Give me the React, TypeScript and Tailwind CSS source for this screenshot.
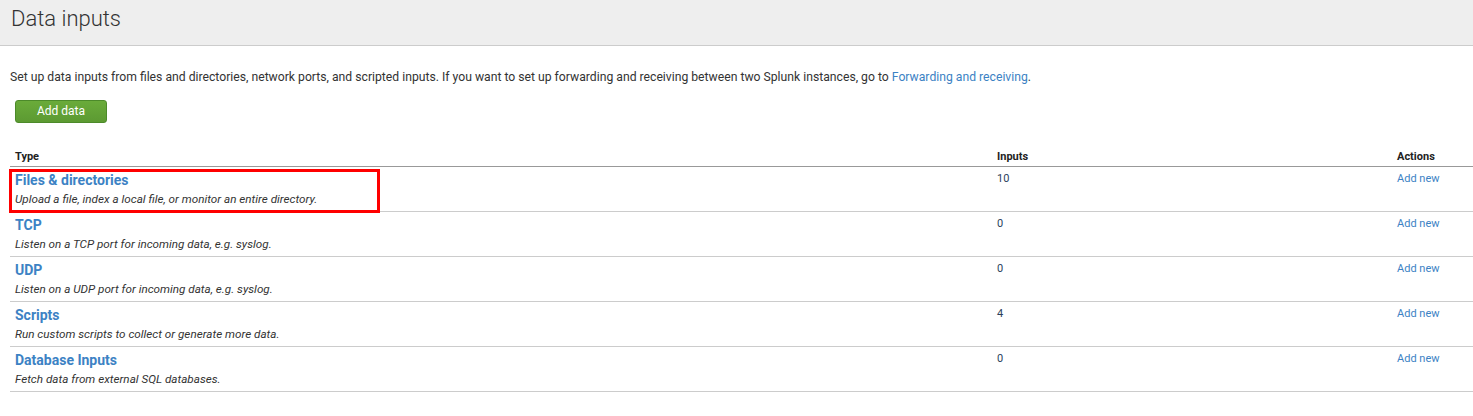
import React from 'react';

interface InputType {
  name: string;
  description: string;
  count: number;
}

const inputTypes: InputType[] = [
  { name: 'Files & directories', description: 'Upload a file, index a local file, or monitor an entire directory.', count: 10 },
  { name: 'TCP', description: 'Listen on a TCP port for incoming data, e.g. syslog.', count: 0 },
  { name: 'UDP', description: 'Listen on a UDP port for incoming data, e.g. syslog.', count: 0 },
  { name: 'Scripts', description: 'Run custom scripts to collect or generate more data.', count: 4 },
  { name: 'Database Inputs', description: 'Fetch data from external SQL databases.', count: 0 },
];

export default function App() {
  return (
    <div className="relative min-h-[416px] bg-white text-[#333333] font-['Roboto',_'Liberation_Sans',_sans-serif]">
      {/* Page header */}
      <div className="h-[46px] bg-[#eeeeee] border-b border-[#cccccc] px-[11px] pt-[3px]">
        <h1 className="text-[22px] font-light leading-[32px] text-[#333333]">Data inputs</h1>
      </div>

      <div className="pl-[10px]">
        <p className="pt-[23px] text-[12.2px] leading-[16px]">
          Set up data inputs from files and directories, network ports, and scripted inputs. If you want to set up forwarding and receiving between two Splunk instances, go to{' '}
          <a className="text-[#3c82c4]">Forwarding and receiving</a>.
        </p>

        <button className="ml-[5px] mt-[15px] h-[23px] w-[92px] rounded-[3px] border border-[#4c8a2a] bg-gradient-to-b from-[#6aab3a] to-[#5c9a32] text-[12px] leading-[21px] text-white">
          Add data
        </button>

        {/* Table */}
        <div className="mt-[23px]">
          <div className="grid h-[21px] grid-cols-[982px_400px_1fr] border-b border-[#999999] text-[11px] font-bold leading-[14px] text-[#222222]">
            <div className="pl-[5px] pt-[4px]">Type</div>
            <div className="pl-[5px] pt-[4px]">Inputs</div>
            <div className="pl-[5px] pt-[4px]">Actions</div>
          </div>
          {inputTypes.map((t) => (
            <div key={t.name} className="grid h-[45px] grid-cols-[982px_400px_1fr] border-b border-[#cccccc]">
              <div className="pl-[5px] pt-[5px]">
                <a className="block text-[14px] font-bold leading-[17px] text-[#3c82c4]">{t.name}</a>
                <p className="mt-[3px] text-[11.7px] italic leading-[15px] text-[#333333]">{t.description}</p>
              </div>
              <div className="pl-[5px] pt-[5px] text-[11px] leading-[14px] text-[#2b3f5c]">{t.count}</div>
              <div className="pl-[5px] pt-[5px] text-[11px] leading-[14px] text-[#3c82c4]">
                <a>Add new</a>
              </div>
            </div>
          ))}
        </div>
      </div>

      {/* Annotation highlight */}
      <div className="pointer-events-none absolute left-[9px] top-[169px] h-[44px] w-[371px] border-[3px] border-[#ff0000]" />
    </div>
  );
}
